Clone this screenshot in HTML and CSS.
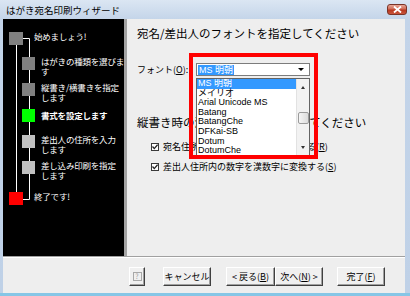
FILE: index.html
```html
<!DOCTYPE html>
<html lang="ja">
<head>
    <meta charset="UTF-8">
    <meta name="viewport" content="width=device-width, initial-scale=1.0">
    <title>はがき宛名印刷ウィザード</title>
    <link rel="stylesheet" href="styles.css">
</head>
<body>
    <div class="window">
        <div class="titlebar">
            <span class="title">はがき宛名印刷ウィザード</span>
            <button type="button" class="close">
                <svg width="9" height="7" viewBox="0 0 9 7"><path d="M1 0.5 L8 6.5 M8 0.5 L1 6.5" stroke="#fff" stroke-width="1.8"/></svg>
            </button>
        </div>
        <div class="client">
            <div class="content">
                <div class="sidebar">
                    <svg class="tree" width="124" height="200" viewBox="0 0 124 200">
                        <path d="M13.5 26 V173" stroke="#fff" fill="none"/>
                        <path d="M20 19.5 H26.5 V180.5 H20" stroke="#fff" fill="none"/>
                    </svg>
                    <ul class="steps">
                        <li class="step outer first"><span class="box gray"></span><span class="label">始めましょう!</span></li>
                        <li class="step inner"><span class="box gray"></span><span class="label">はがきの種類を選びま<br>す</span></li>
                        <li class="step inner"><span class="box gray"></span><span class="label">縦書き/横書きを指定<br>します</span></li>
                        <li class="step inner current"><span class="box green"></span><span class="label">書式を設定します</span></li>
                        <li class="step inner"><span class="box light"></span><span class="label">差出人の住所を入力<br>します</span></li>
                        <li class="step inner"><span class="box light"></span><span class="label">差し込み印刷を指定<br>します</span></li>
                        <li class="step outer last"><span class="box red"></span><span class="label">終了です!</span></li>
                    </ul>
                </div>
                <div class="main">
                    <h1>宛名/差出人のフォントを指定してください</h1>
                    <div class="font-row">
                        <label>フォント(<u>O</u>):</label>
                        <div class="combo">
                            <span class="combo-value">MS 明朝</span>
                            <span class="combo-arrow"></span>
                            <div class="dropdown">
                                <ul class="options">
                                    <li class="selected">MS 明朝</li>
                                    <li>メイリオ</li>
                                    <li>Arial Unicode MS</li>
                                    <li>Batang</li>
                                    <li>BatangChe</li>
                                    <li>DFKai-SB</li>
                                    <li>Dotum</li>
                                    <li>DotumChe</li>
                                </ul>
                                <div class="scrollbar">
                                    <span class="arrow up"></span>
                                    <span class="thumb"></span>
                                    <span class="arrow down"></span>
                                </div>
                            </div>
                        </div>
                    </div>
                    <h2>縦書き時の漢数字の書式を指定してください</h2>
                    <div class="check-row">
                        <span class="check"><svg width="6" height="6" viewBox="0 0 6 6"><path d="M0.5 2.5 L2.3 4.6 L5.6 0.6" stroke="#222" stroke-width="1.3" fill="none"/></svg></span>
                        <span>宛名住所内の数字を漢数字に変換する(<u>R</u>)</span>
                    </div>
                    <div class="check-row">
                        <span class="check"><svg width="6" height="6" viewBox="0 0 6 6"><path d="M0.5 2.5 L2.3 4.6 L5.6 0.6" stroke="#222" stroke-width="1.3" fill="none"/></svg></span>
                        <span>差出人住所内の数字を漢数字に変換する(<u>S</u>)</span>
                    </div>
                    <div class="highlight"></div>
                </div>
            </div>
            <div class="separator"></div>
            <div class="buttons">
                <button type="button" class="btn help"><span class="help-icon">?</span></button>
                <button type="button" class="btn cancel">キャンセル</button>
                <button type="button" class="btn back">&lt; 戻る(<u>B</u>)</button>
                <button type="button" class="btn next">次へ(<u>N</u>) &gt;</button>
                <button type="button" class="btn finish">完了(<u>F</u>)</button>
            </div>
        </div>
    </div>
</body>
</html>
```

FILE: styles.css
```css
* {
    margin: 0;
    padding: 0;
    box-sizing: border-box;
}

body {
    width: 410px;
    height: 296px;
    overflow: hidden;
    font-family: "Noto Sans CJK JP", "Noto Sans", sans-serif;
    font-size: 9px;
    color: #000;
}

.window {
    width: 410px;
    height: 296px;
    display: flex;
    flex-direction: column;
    padding: 0 5px 0 3px;
    background: linear-gradient(180deg, #dbe6f3 0%, #c3d4e9 20px, #bfd1e7 100%);
    border-bottom: 3px solid #86c6e6;
}

.titlebar {
    height: 19px;
    display: flex;
    align-items: center;
    justify-content: space-between;
    padding-left: 3px;
}

.title {
    font-size: 9.5px;
    line-height: 12px;
    margin-top: 1px;
}

.close {
    width: 20px;
    height: 11px;
    margin-right: -2px;
    border: 1px solid #7a3428;
    border-radius: 3px;
    background: linear-gradient(180deg, #e7a796 0%, #d06a55 45%, #b7361f 55%, #c9553b 100%);
    display: flex;
    align-items: center;
    justify-content: center;
}

.client {
    flex: 1;
    display: flex;
    flex-direction: column;
    background: #eeeeee;
}

.content {
    height: 237px;
    display: flex;
}

/* left step list */
.sidebar {
    position: relative;
    width: 124px;
    background: #000;
    border-right: 3px solid #a3a3a3;
    color: #fff;
    font-size: 8.5px;
    letter-spacing: -0.2px;
}

.tree {
    position: absolute;
    left: 0;
    top: 0;
}

.steps {
    position: relative;
    list-style: none;
    padding-top: 13px;
}

.step {
    display: flex;
    align-items: flex-start;
    height: 26px;
}

.step.first {
    height: 25px;
}

.step.last {
    margin-top: 5px;
}

.step.outer {
    padding-left: 6px;
    gap: 11px;
}

.step.inner {
    padding-left: 19px;
    gap: 6px;
}

.box {
    flex: none;
    width: 13px;
    height: 13px;
}

.step.outer .box {
    width: 14px;
}

.box.gray { background: #808080; }
.box.green { background: #00ff00; }
.box.light { background: #c0c0c0; }
.box.red { background: #ff0000; }

.label {
    white-space: nowrap;
    line-height: 10px;
    margin-top: -1px;
}

.step.current .label {
    font-weight: bold;
    margin-top: 1px;
}

/* right page */
.main {
    position: relative;
    flex: 1;
    padding: 7px 0 0 10px;
}

.main h1,
.main h2 {
    font-size: 11.5px;
    font-weight: normal;
    line-height: 14px;
    white-space: nowrap;
}

.font-row {
    display: flex;
    align-items: center;
    height: 13px;
    margin-top: 23px;
}

.font-row label {
    width: 59px;
    line-height: 12px;
}

.combo {
    position: relative;
    width: 114px;
    height: 13px;
    border: 1px solid #7c7c7c;
    background: #fff;
    display: flex;
    align-items: center;
}

.combo-value {
    margin-left: 1px;
    padding: 0 1px;
    height: 10px;
    line-height: 10px;
    background: #3399ff;
    color: #fff;
    font-family: "Liberation Sans", "Noto Sans CJK JP", sans-serif;
    font-size: 9px;
}

.combo-arrow {
    margin-left: auto;
    margin-right: 5px;
    width: 0;
    height: 0;
    border-left: 3px solid transparent;
    border-right: 3px solid transparent;
    border-top: 3px solid #000;
}

.dropdown {
    position: absolute;
    left: -1px;
    top: 14px;
    width: 114px;
    height: 78px;
    border: 1px solid #646464;
    background: #fff;
    display: flex;
    z-index: 2;
}

.options {
    flex: 1;
    list-style: none;
    font-family: "Liberation Sans", "Noto Sans CJK JP", sans-serif;
    font-size: 9px;
    line-height: 9.6px;
    overflow: hidden;
}

.options li {
    padding-left: 1px;
    white-space: nowrap;
}

.options li.selected {
    background: #3399ff;
    color: #fff;
}

.scrollbar {
    width: 13px;
    display: flex;
    flex-direction: column;
    align-items: center;
    background: #f2f2f2;
    border-left: 1px solid #e2e2e2;
}

.arrow {
    width: 0;
    height: 0;
    border-left: 2px solid transparent;
    border-right: 2px solid transparent;
}

.arrow.up {
    margin-top: 7px;
    border-bottom: 3px solid #333;
}

.arrow.down {
    margin-top: auto;
    margin-bottom: 6px;
    border-top: 3px solid #333;
}

.thumb {
    width: 11px;
    height: 12px;
    margin-top: 23px;
    border: 1px solid #9b9b9b;
    border-radius: 2px;
    background: linear-gradient(90deg, #f6f6f6, #dcdcdc);
}

.main h2 {
    margin-top: 39px;
}

.check-row {
    display: flex;
    align-items: center;
    gap: 4px;
    height: 12px;
    line-height: 12px;
    margin-top: 12px;
    padding-left: 14px;
    white-space: nowrap;
}

.check-row + .check-row {
    margin-top: 8px;
}

.check {
    flex: none;
    width: 8px;
    height: 8px;
    border: 1px solid #3a3a3a;
    background: #fff;
    display: flex;
    align-items: center;
    justify-content: center;
}

.highlight {
    position: absolute;
    left: 62px;
    top: 34px;
    width: 129px;
    height: 106px;
    border: 4px solid #ff0000;
    z-index: 3;
}

.separator {
    border-top: 1px solid #a0a0a0;
    border-bottom: 1px solid #ffffff;
}

/* bottom buttons */
.buttons {
    flex: 1;
    display: flex;
    justify-content: flex-end;
    align-items: flex-start;
    padding: 9px 20px 0 0;
}

.btn {
    height: 19px;
    width: 48px;
    font-family: "Noto Sans CJK JP", sans-serif;
    font-size: 9px;
    line-height: 12px;
    background: #f0f0f0;
    color: #000;
    border: 1px solid;
    border-color: #ffffff #404040 #404040 #ffffff;
    box-shadow: inset -1px -1px #a0a0a0;
    white-space: nowrap;
}

.btn.help {
    width: 16px;
    display: flex;
    align-items: center;
    justify-content: center;
}

.help-icon {
    width: 9px;
    height: 9px;
    border: 1px solid #a8a8a8;
    color: #a0a0a0;
    font-size: 7px;
    line-height: 7px;
    text-align: center;
}

.btn.cancel {
    margin-left: 18px;
}

.btn.back {
    width: 49px;
    margin-left: 15px;
}

.btn.finish {
    margin-left: 14px;
}
```
